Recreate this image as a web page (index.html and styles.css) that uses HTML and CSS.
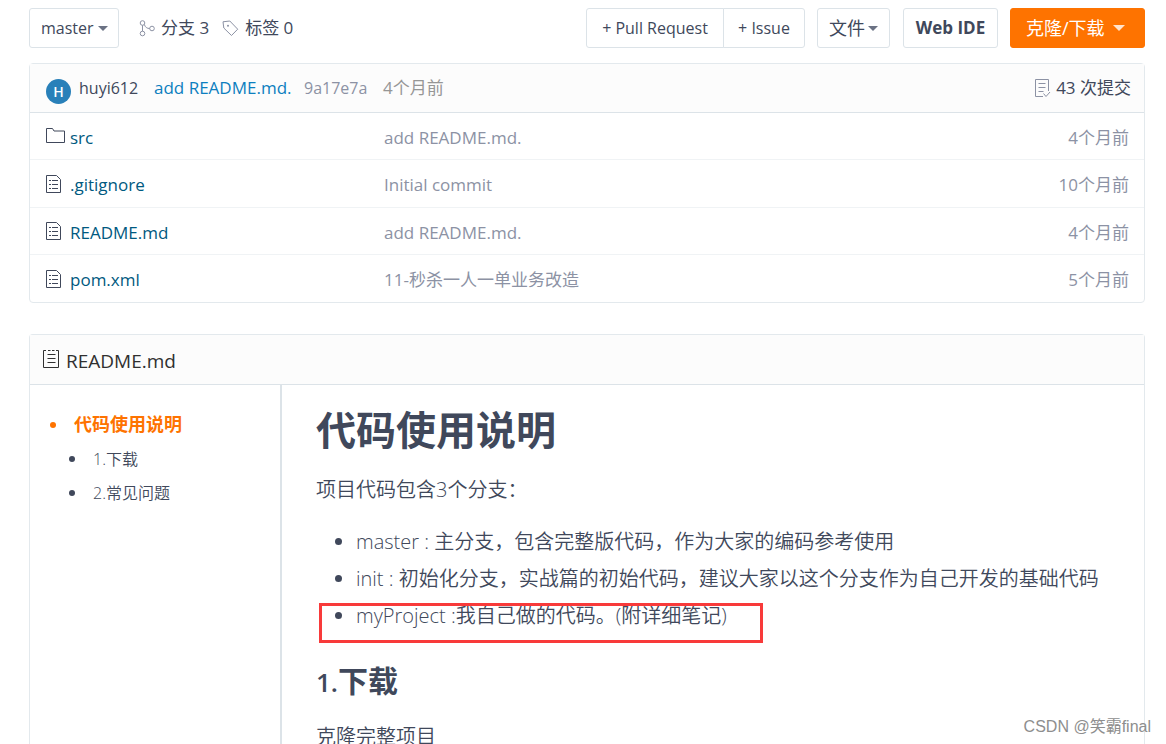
FILE: index.html
```html
<!DOCTYPE html>
<html lang="zh-CN">
<head>
<meta charset="utf-8">
<meta name="viewport" content="width=device-width, initial-scale=1">
<title>README.md</title>
<link rel="stylesheet" href="styles.css">
</head>
<body>
<svg class="defs" aria-hidden="true">
  <symbol id="file" viewBox="0 0 16 18"><path d="M.5 .5H10.500L14.500 4.500v13H.5zM3 5.500h2M6 5.500h6M3 9.500h2M6 9.500h6M3 13.500h2M6 13.500h6"/></symbol>
</svg>
<main class="page">
  <div class="toolbar">
    <label class="branch">
      <select class="btn branch-select" aria-label="Branch"><option>master</option></select>
      <span class="caret"></span>
    </label>
    <nav class="refs">
      <a class="ref" href="#"><svg class="ref-icon" width="16" height="17" viewBox="0 0 16 17"><circle cx="3.500" cy="3" r="2.300"/><circle cx="3.500" cy="13.500" r="2.300"/><circle cx="13" cy="8.500" r="2.300"/><path d="M3.500 5.300v5.900M5.300 4.500C6.500 7.500 8 8.500 10.700 8.500"/></svg>分支 3</a>
      <a class="ref" href="#"><svg class="ref-icon" width="17" height="17" viewBox="0 0 17 17"><path d="M1 1.800 7.800 1 15.700 9.200 9.500 15.500 1.800 8z"/><circle class="dot" cx="6" cy="5.800" r="1"/></svg>标签 0</a>
    </nav>
    <div class="actions">
      <div class="group">
        <button class="btn" type="button">+ Pull Request</button>
        <button class="btn" type="button">+ Issue</button>
      </div>
      <button class="btn file-btn" type="button">文件<span class="caret"></span></button>
      <button class="btn ide-btn" type="button">Web IDE</button>
      <button class="btn clone-btn" type="button">克隆/下载<span class="caret caret-large"></span></button>
    </div>
  </div>

  <section class="panel">
    <div class="commit">
      <span class="avatar">H</span>
      <a class="author" href="#">huyi612</a>
      <a class="message" href="#">add README.md.</a>
      <span class="muted sha">9a17e7a</span>
      <span class="muted">4个月前</span>
      <a class="count" href="#"><svg class="count-icon" width="17" height="19" viewBox="0 0 17 19"><path d="M9 17.500H1.500V.5h13V12M4.500 4.500h7M4.500 8.500h7M4.500 12.500h5M9.500 14.500l2.500 3 4-4.500"/></svg>43 次提交</a>
    </div>
    <table class="files">
      <tbody>
        <tr>
          <td class="name"><a class="file-link" href="#"><svg class="icon folder" width="20" height="18" viewBox="0 0 20 18"><path d="M.5 15.500V1.500h6l1.500 2.500H18.500v11.500z"/></svg>src</a></td>
          <td class="log">add README.md.</td><td class="age">4个月前</td>
        </tr>
        <tr>
          <td class="name"><a class="file-link" href="#"><svg class="icon" width="16" height="18"><use href="#file"/></svg>.gitignore</a></td>
          <td class="log">Initial commit</td><td class="age">10个月前</td>
        </tr>
        <tr>
          <td class="name"><a class="file-link" href="#"><svg class="icon" width="16" height="18"><use href="#file"/></svg>README.md</a></td>
          <td class="log">add README.md.</td><td class="age">4个月前</td>
        </tr>
        <tr>
          <td class="name"><a class="file-link" href="#"><svg class="icon" width="16" height="18"><use href="#file"/></svg>pom.xml</a></td>
          <td class="log">11-秒杀一人一单业务改造</td><td class="age">5个月前</td>
        </tr>
      </tbody>
    </table>
  </section>

  <section class="panel readme">
    <div class="readme-head"><svg class="readme-icon" width="17" height="19" viewBox="0 0 17 19"><path d="M3 .5H.5v17h15V.5h-2.500M5 .5h2.500M9 .5h2.500M4.500 4.500h8M4.500 8.500h8M4.500 12.500h8"/></svg>README.md</div>
    <div class="readme-body">
      <nav class="toc">
        <ul class="toc-list">
          <li class="toc-top"><a class="toc-active" href="#intro">代码使用说明</a>
            <ul class="toc-sub">
              <li><a href="#download">1.下载</a></li>
              <li><a href="#faq">2.常见问题</a></li>
            </ul>
          </li>
        </ul>
      </nav>
      <article class="content">
        <h1 class="title" id="intro">代码使用说明</h1>
        <p class="para">项目代码包含3个分支：</p>
        <ul class="list">
          <li>master : 主分支，包含完整版代码，作为大家的编码参考使用</li>
          <li>init : 初始化分支，实战篇的初始代码，建议大家以这个分支作为自己开发的基础代码</li>
          <li class="marked">myProject :我自己做的代码。(附详细笔记)</li>
        </ul>
        <h2 class="subtitle" id="download"><span class="number">1.</span>下载</h2>
        <p class="para">克隆完整项目</p>
      </article>
    </div>
  </section>
</main>
<div class="watermark">CSDN @笑霸final</div>
</body>
</html>
```
FILE: styles.css
```css
*, *::before, *::after { box-sizing: border-box; }
body {
  margin: 0;
  height: 100vh;
  overflow: hidden;
  background: #fff;
  color: #40485b;
  font: 400 17px/24px "Open Sans", "Noto Sans CJK SC", sans-serif;
}
a { color: inherit; text-decoration: none; }
ul { margin: 0; padding: 0; }
svg { fill: none; stroke: currentColor; stroke-width: 1; flex: none; }
.defs { position: absolute; width: 0; height: 0; }
.page {
  display: flex;
  flex-direction: column;
  height: 100%;
  padding: 8px 21px 0 29px;
}
.toolbar { display: flex; align-items: center; height: 40px; margin-bottom: 15px; flex: none; }
.btn {
  display: flex;
  align-items: center;
  height: 40px;
  padding: 0 12px;
  border: 1px solid #dce3e8;
  border-radius: 3px;
  background: #fff;
  color: #40485b;
  font: inherit;
  white-space: nowrap;
}
.caret {
  border: 5px solid transparent;
  border-top-color: #6b7284;
  border-bottom: 0;
  margin-left: 3px;
}
.caret-large { border-width: 6px 6px 0; border-top-color: #ffe3cc; margin-left: 8px; }
.branch { display: flex; align-items: center; position: relative; }
.branch-select { appearance: none; width: 90px; padding: 0 11px; font-size: 16px; }
.branch .caret { position: absolute; right: 11px; pointer-events: none; }
.refs { display: flex; gap: 13px; margin-left: 20px; font-size: 17px; }
.ref { display: flex; align-items: center; gap: 6px; white-space: nowrap; }
.ref-icon { color: #8c92a4; }
.dot { fill: currentColor; stroke: none; }
.actions { display: flex; gap: 12px; margin-left: auto; }
.group { display: flex; }
.group .btn { justify-content: center; font-size: 16px; }
.group .btn:first-child { border-radius: 3px 0 0 3px; width: 138px; }
.group .btn:last-child { border-radius: 0 3px 3px 0; margin-left: -1px; width: 82px; }
.file-btn { width: 73px; padding: 0 11px; font-size: 18px; }
.ide-btn { width: 95px; margin-left: 1px; justify-content: center; font-weight: 700; }
.clone-btn { width: 135px; padding: 0 15px; border-color: #fe7300; background: #fe7300; color: #fff; font-size: 18px; }

.panel { border: 1px solid #e3e9ed; border-radius: 4px; flex: none; }
.commit {
  display: flex;
  align-items: center;
  height: 49px;
  padding: 0 13px 0 16px;
  border-bottom: 1px solid #dce3e8;
  background: #fcfcfc;
}
.avatar {
  width: 25px;
  height: 25px;
  margin: 6px 8px 0 0;
  border-radius: 50%;
  background: #2980b9;
  color: #fff;
  font: 600 14px/25px "Open Sans", sans-serif;
  text-align: center;
}
.author { width: 75px; font-size: 16px; }
.message { width: 150px; color: #0d7fbf; }
.sha { width: 79px; font-size: 16px; }
.muted, .log, .age { color: #8c92a4; }
.muted + .muted { color: #969696; }
.count { display: flex; align-items: center; gap: 5px; margin-left: auto; }
.count-icon { color: #8c92a4; }
.files { width: 100%; border-collapse: separate; border-spacing: 0; table-layout: fixed; }
.files td { height: 48px; padding: 3px 0 0; border-bottom: 1px solid #f0f3f5; }
.files tr:nth-child(odd) td { height: 47px; }
.files tr:last-child td { height: 47px; border-bottom: 0; }
.files .name { width: 354px; padding-left: 16px; }
.files .age { width: 150px; padding-right: 15px; text-align: right; }
.file-link { display: flex; align-items: center; color: #005980; }
.icon { margin: 0 8px 3px 0; color: #40485b; }
.folder { margin-right: 4px; }

.readme { display: flex; flex-direction: column; flex: 1 0 auto; margin-top: 31px; border-bottom: 0; border-radius: 4px 4px 0 0; }
.readme-head {
  display: flex;
  align-items: center;
  gap: 6px;
  height: 50px;
  padding: 3px 13px 0;
  border-bottom: 1px solid #dce3e8;
  background: #fcfcfc;
  color: #303030;
  font-size: 19px;
}
.readme-icon { margin-bottom: 3px; }
.readme-body { display: flex; flex: 1; }
.toc { width: 252px; flex: none; padding: 22px 0 0 44px; border-right: 2px solid #dce3e8; font-size: 16px; line-height: 34px; }
.toc li { list-style: none; }
.toc li::before {
  content: "";
  display: inline-block;
  width: 6px;
  height: 6px;
  margin: 0 18px 3px -24px;
  border-radius: 50%;
  background: currentColor;
  vertical-align: middle;
}
.toc-top { color: #fe7300; }
.toc-active { font-size: 18px; font-weight: 700; }
.toc-sub { padding-left: 19px; color: #40485b; font-weight: 350; }
.content { flex: 1; min-width: 0; padding: 17px 34px 0; font-size: 20px; font-weight: 350; line-height: 37px; }
.title { margin: 0; font-size: 40px; line-height: 56px; font-weight: 700; }
.para { margin: 13px 0 15px; }
.list { padding-left: 40px; }
.marked { position: relative; }
.marked::after {
  content: "";
  position: absolute;
  left: -37px;
  top: 6px;
  width: 444px;
  height: 40px;
  border: 3px solid #f83a3a;
}
.subtitle { margin: 24px 0 0; font-size: 30px; line-height: 46px; font-weight: 700; }
.number { font-size: 26px; font-weight: 600; }
.watermark { position: absolute; right: 15px; bottom: 5px; color: #8e8e8e; font: 16px/24px "Liberation Sans", "Noto Sans CJK SC", sans-serif; }
```
